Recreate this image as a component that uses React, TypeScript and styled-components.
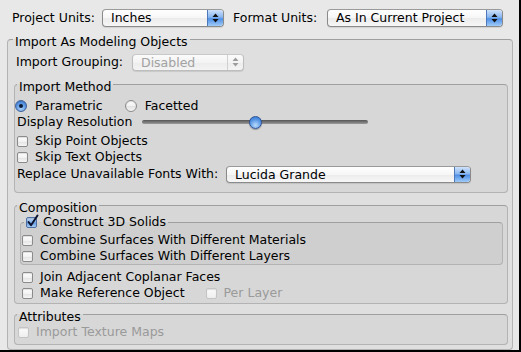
import styled, { createGlobalStyle } from "styled-components";

const GlobalStyle = createGlobalStyle`
  html, body {
    margin: 0;
    padding: 0;
    background: #e8e8e8;
  }
  body {
    font-family: "DejaVu Sans", Verdana, sans-serif;
    font-size: 12.5px;
    color: #000;
  }
  * {
    box-sizing: border-box;
  }
`;

const Window = styled.div`
  width: 521px;
  height: 352px;
  background: #e8e8e8;
  border-right: 2px solid #000;
  border-bottom: 2px solid #000;
  padding-top: 9px;
  overflow: hidden;
`;

const TopRow = styled.div`
  display: flex;
  align-items: center;
  height: 18px;
  padding-left: 12px;
`;

const Label = styled.span<{ $width?: number; $ml?: number; $disabled?: boolean }>`
  flex: none;
  width: ${(p) => (p.$width ? `${p.$width}px` : "auto")};
  margin-left: ${(p) => p.$ml ?? 0}px;
  white-space: nowrap;
  line-height: 16px;
  color: ${(p) => (p.$disabled ? "#9a9a9a" : "#000")};
`;

/* ---------- popup button ---------- */

const PopupFrame = styled.div<{ $width: number; $height: number; $disabled?: boolean }>`
  flex: none;
  display: flex;
  width: ${(p) => p.$width}px;
  height: ${(p) => p.$height}px;
  border: 1px solid ${(p) => (p.$disabled ? "#bdbdbd" : "#8a8a8a")};
  border-top-color: ${(p) => (p.$disabled ? "#c8c8c8" : "#9a9a9a")};
  border-radius: 4px;
  overflow: hidden;
  background: ${(p) =>
    p.$disabled
      ? "linear-gradient(#fbfbfb, #f3f3f3 50%, #ececec 51%, #f4f4f4)"
      : "linear-gradient(#ffffff, #f6f6f6 50%, #ebebeb 51%, #f7f7f7)"};
  box-shadow: 0 1px 1px rgba(0, 0, 0, 0.1);
`;

const PopupText = styled.span<{ $disabled?: boolean }>`
  flex: 1;
  padding-left: 8px;
  line-height: ${(p) => (p.$disabled ? 15 : 16)}px;
  white-space: nowrap;
  color: ${(p) => (p.$disabled ? "#a2a2a2" : "#000")};
`;

const PopupCap = styled.span<{ $disabled?: boolean }>`
  flex: none;
  width: 16px;
  display: flex;
  align-items: center;
  justify-content: center;
  border-left: 1px solid ${(p) => (p.$disabled ? "#d0d0d0" : "#4f78b8")};
  background: ${(p) =>
    p.$disabled
      ? "transparent"
      : "linear-gradient(#cfe2fa, #88b6ef 45%, #4f90e6 55%, #9fcbf8)"};
`;

const Popup = ({
  value,
  width,
  height = 18,
  disabled,
}: {
  value: string;
  width: number;
  height?: number;
  disabled?: boolean;
}) => (
  <PopupFrame $width={width} $height={height} $disabled={disabled}>
    <PopupText $disabled={disabled}>{value}</PopupText>
    <PopupCap $disabled={disabled}>
      <svg width="7" height="10" viewBox="0 0 7 10">
        <path d="M3.5 0.5 L6.5 4 L0.5 4 Z M0.5 6 L6.5 6 L3.5 9.5 Z" fill={disabled ? "#9c9c9c" : "#111"} />
      </svg>
    </PopupCap>
  </PopupFrame>
);

/* ---------- group box ---------- */

const Group = styled.fieldset<{ $mt?: number; $ml?: number; $w?: number; $pl: number; $pr: number; $pb: number }>`
  margin: ${(p) => p.$mt ?? 0}px 0 0 ${(p) => p.$ml ?? 0}px;
  width: ${(p) => (p.$w ? `${p.$w}px` : "auto")};
  min-width: 0;
  padding: 0 ${(p) => p.$pr}px ${(p) => p.$pb}px ${(p) => p.$pl}px;
  border: 1px solid #b3b3b3;
  border-top-color: #9f9f9f;
  border-radius: 4px;
  background: rgba(0, 0, 0, 0.035);
`;

const Legend = styled.legend<{ $ml?: number; $plain?: boolean }>`
  display: flex;
  align-items: center;
  margin-left: ${(p) => p.$ml ?? 0}px;
  padding: ${(p) => (p.$plain ? "0 2px" : "6px 2px 0")};
  line-height: 16px;
  white-space: nowrap;
`;

/* ---------- rows ---------- */

const Row = styled.div<{ $mt?: number; $ml?: number; $h?: number }>`
  display: flex;
  align-items: center;
  height: ${(p) => p.$h ?? 16}px;
  margin-top: ${(p) => p.$mt ?? 0}px;
  margin-left: ${(p) => p.$ml ?? 0}px;
`;

const CheckLabel = styled.label<{ $ml?: number; $gap?: number; $disabled?: boolean }>`
  display: flex;
  align-items: center;
  gap: ${(p) => p.$gap ?? 7}px;
  margin-left: ${(p) => p.$ml ?? 0}px;
  white-space: nowrap;
  line-height: 16px;
  color: ${(p) => (p.$disabled ? "#9a9a9a" : "#000")};
`;

const Box = styled.span<{ $checked?: boolean; $disabled?: boolean }>`
  flex: none;
  position: relative;
  width: 11px;
  height: 11px;
  border: 1px solid ${(p) => (p.$disabled ? "#c4c4c4" : p.$checked ? "#4f6fa3" : "#8b8b8b")};
  border-radius: 2px;
  background: ${(p) =>
    p.$checked
      ? "linear-gradient(#c3dbf7, #7eaeea 50%, #5e97e2 51%, #a9cff7)"
      : p.$disabled
      ? "linear-gradient(#fbfbfb, #eeeeee)"
      : "linear-gradient(#ffffff, #f2f2f2 50%, #e3e3e3 51%, #f5f5f5)"};
  box-shadow: inset 0 1px 1px rgba(0, 0, 0, 0.12);
`;

const Tick = styled.svg`
  position: absolute;
  left: 0;
  top: -3px;
  overflow: visible;
`;

const Check = ({
  label,
  checked,
  disabled,
  ml,
}: {
  label: string;
  checked?: boolean;
  disabled?: boolean;
  ml?: number;
}) => (
  <CheckLabel $ml={ml} $disabled={disabled} $gap={checked ? 6 : 7}>
    <Box $checked={checked} $disabled={disabled}>
      {checked && (
        <Tick width="11" height="12" viewBox="0 0 11 12">
          <path d="M1.5 7 L4 10.2 L10.5 0.5" fill="none" stroke="#0d1430" strokeWidth="2" strokeLinecap="round" strokeLinejoin="round" />
        </Tick>
      )}
    </Box>
    {label}
  </CheckLabel>
);

const RadioDot = styled.span<{ $on?: boolean }>`
  flex: none;
  display: flex;
  align-items: center;
  justify-content: center;
  width: 12px;
  height: 12px;
  border-radius: 50%;
  border: 1px solid ${(p) => (p.$on ? "#3e5f96" : "#8b8b8b")};
  background: ${(p) =>
    p.$on
      ? "radial-gradient(circle at 50% 75%, #a9d0f8, #5a97e4 55%, #3f7ed8)"
      : "linear-gradient(#ffffff, #f0f0f0 50%, #e2e2e2 51%, #f4f4f4)"};
  box-shadow: inset 0 1px 1px rgba(0, 0, 0, 0.12);

  &::after {
    content: "";
    display: ${(p) => (p.$on ? "block" : "none")};
    width: 4px;
    height: 4px;
    border-radius: 50%;
    background: #0b1a36;
  }
`;

const Radio = ({ label, on, ml }: { label: string; on?: boolean; ml?: number }) => (
  <CheckLabel $ml={ml} $gap={8}>
    <RadioDot $on={on} />
    {label}
  </CheckLabel>
);

/* ---------- slider ---------- */

const Track = styled.div<{ $width: number }>`
  position: relative;
  width: ${(p) => p.$width}px;
  height: 4px;
  border-radius: 2px;
  background: linear-gradient(#555, #7d7d7d 60%, #9b9b9b);
`;

const Knob = styled.span`
  position: absolute;
  top: 50%;
  width: 13px;
  height: 13px;
  margin: -6.5px 0 0 -6.5px;
  border-radius: 50%;
  border: 1px solid #2f5497;
  background: radial-gradient(circle at 50% 75%, #b9dbfb, #5b99e5 55%, #2e6fd0);
  box-shadow: 0 1px 1px rgba(0, 0, 0, 0.3);
`;

const Slider = ({ value, max, width }: { value: number; max: number; width: number }) => (
  <Track $width={width}>
    <Knob style={{ left: `${(value / max) * 100}%` }} />
  </Track>
);

export default function App() {
  return (
    <Window>
      <GlobalStyle />
      <TopRow>
        <Label $width={90}>Project Units:</Label>
        <Popup value="Inches" width={122} />
        <Label $ml={9} $width={94}>Format Units:</Label>
        <Popup value="As In Current Project" width={176} />
      </TopRow>

      <Group $mt={1} $ml={7} $w={506} $pl={6} $pr={4} $pb={4}>
        <Legend $ml={-1}>Import As Modeling Objects</Legend>
        <Row $mt={3} $h={18} $ml={2}>
          <Label $width={116}>Import Grouping:</Label>
          <Popup value="Disabled" width={112} height={17} disabled />
        </Row>

        <Group $mt={2} $pl={2} $pr={3} $pb={9}>
          <Legend>Import Method</Legend>
          <Row $mt={3} $ml={-2}>
            <Radio label="Parametric" on />
            <Radio label="Facetted" ml={22} />
          </Row>
          <Row>
            <Label $width={125}>Display Resolution</Label>
            <Slider value={1} max={2} width={226} />
          </Row>
          <Row $mt={3}>
            <Check label="Skip Point Objects" />
          </Row>
          <Row>
            <Check label="Skip Text Objects" />
          </Row>
          <Row $h={18}>
            <Label $width={209}>Replace Unavailable Fonts With:</Label>
            <Popup value="Lucida Grande" width={245} height={17} />
          </Row>
        </Group>

        <Group $mt={1} $pl={5} $pr={4} $pb={2}>
          <Legend $ml={-3}>Composition</Legend>
          <Group $mt={-2} $pl={1} $pr={3} $pb={0}>
            <Legend $plain $ml={2}>
              <Check label="Construct 3D Solids" checked />
            </Legend>
            <Row $mt={2}>
              <Check label="Combine Surfaces With Different Materials" />
            </Row>
            <Row>
              <Check label="Combine Surfaces With Different Layers" />
            </Row>
          </Group>
          <Row $mt={4} $ml={2}>
            <Check label="Join Adjacent Coplanar Faces" />
          </Row>
          <Row $ml={2}>
            <Check label="Make Reference Object" />
            <Check label="Per Layer" disabled ml={21} />
          </Row>
        </Group>

        <Group $mt={-1} $pl={3} $pr={4} $pb={4}>
          <Legend $ml={-1}>Attributes</Legend>
          <Row $mt={-1}>
            <Check label="Import Texture Maps" disabled />
          </Row>
        </Group>
      </Group>
    </Window>
  );
}
